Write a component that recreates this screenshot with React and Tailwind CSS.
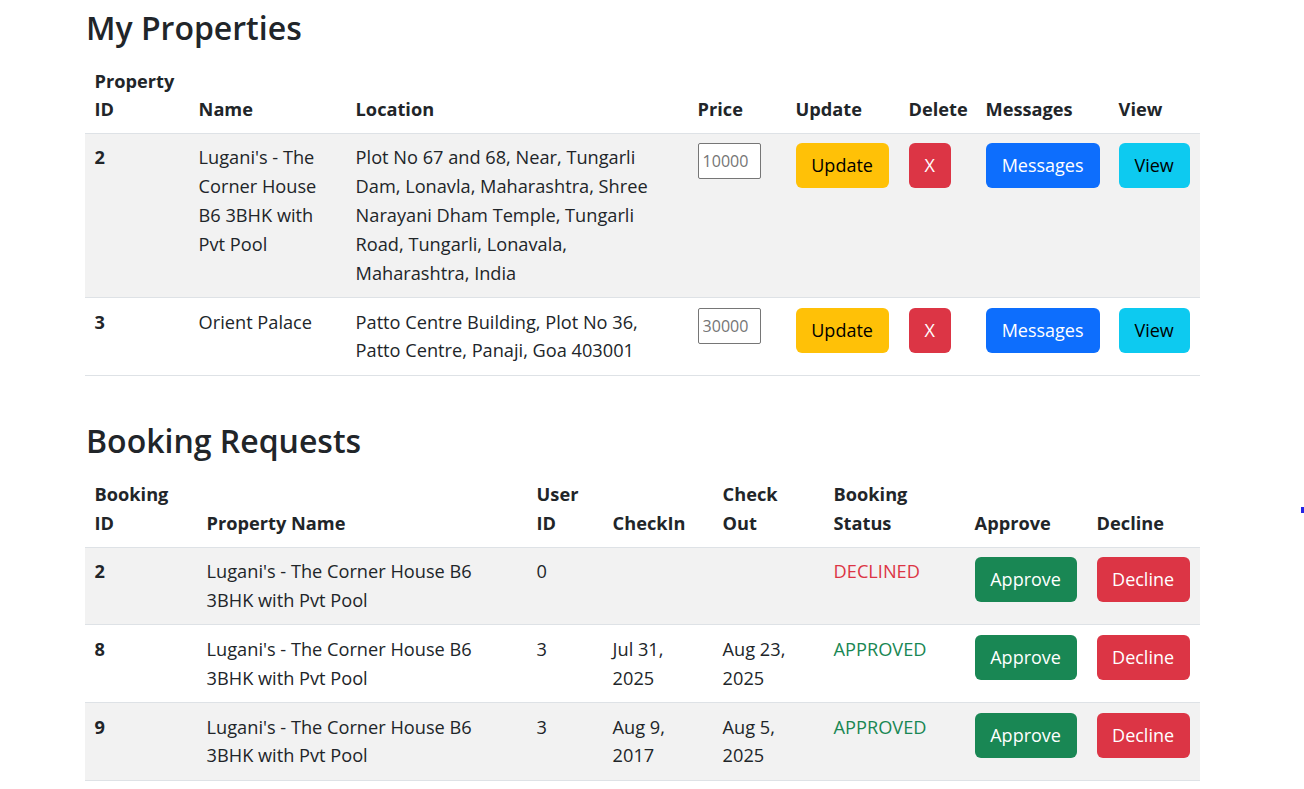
import React from "react";

const FONT = "font-['Segoe_UI','Open_Sans','Noto_Sans',sans-serif]";

function Btn({ w, bg, fg, children }) {
  return (
    <button
      className={`inline-flex h-[45px] items-center justify-center rounded-[6px] border border-transparent text-[18px] leading-[28.8px] ${w} ${bg} ${fg}`}
    >
      {children}
    </button>
  );
}

function Lines({ lines }) {
  return (
    <div className="whitespace-nowrap">
      {lines.map((l, i) => (
        <div key={i}>{l}</div>
      ))}
    </div>
  );
}

const properties = [
  {
    id: "2",
    name: ["Lugani's - The", "Corner House", "B6 3BHK with", "Pvt Pool"],
    loc: [
      "Plot No 67 and 68, Near, Tungarli",
      "Dam, Lonavla, Maharashtra, Shree",
      "Narayani Dham Temple, Tungarli",
      "Road, Tungarli, Lonavala,",
      "Maharashtra, India",
    ],
    price: "10000",
  },
  {
    id: "3",
    name: ["Orient Palace"],
    loc: ["Patto Centre Building, Plot No 36,", "Patto Centre, Panaji, Goa 403001"],
    price: "30000",
  },
];

const bookings = [
  {
    id: "2",
    name: ["Lugani's - The Corner House B6", "3BHK with Pvt Pool"],
    user: "0",
    inD: [],
    outD: [],
    status: "DECLINED",
  },
  {
    id: "8",
    name: ["Lugani's - The Corner House B6", "3BHK with Pvt Pool"],
    user: "3",
    inD: ["Jul 31,", "2025"],
    outD: ["Aug 23,", "2025"],
    status: "APPROVED",
  },
  {
    id: "9",
    name: ["Lugani's - The Corner House B6", "3BHK with Pvt Pool"],
    user: "3",
    inD: ["Aug 9,", "2017"],
    outD: ["Aug 5,", "2025"],
    status: "APPROVED",
  },
];

const th = "px-[9.6px] pt-[10.6px] pb-[8.6px] text-left align-bottom font-bold border-b border-[#dee2e6]";
const td = "px-[9.6px] py-[9.6px] align-top border-b border-[#dee2e6]";

export default function App() {
  return (
    <div className={`relative min-h-[789px] bg-white text-[#212529] text-[18.2px] leading-[28.8px] ${FONT}`}>
      <div className="ml-[85px] w-[1115px] pt-[5px]">
        <h2 className="mb-[5px] pl-[1px] text-[32px] font-semibold leading-[46px]">My Properties</h2>
        <table className="mb-[42px] w-full table-fixed border-collapse">
          <colgroup>
            <col className="w-[104px]" />
            <col className="w-[157px]" />
            <col className="w-[342px]" />
            <col className="w-[98px]" />
            <col className="w-[113px]" />
            <col className="w-[77px]" />
            <col className="w-[133px]" />
            <col className="w-[91px]" />
          </colgroup>
          <thead>
            <tr>
              <th className={th}>Property<br />ID</th>
              <th className={th}>Name</th>
              <th className={th}>Location</th>
              <th className={th}>Price</th>
              <th className={th}>Update</th>
              <th className={th}>Delete</th>
              <th className={th}>Messages</th>
              <th className={th}>View</th>
            </tr>
          </thead>
          <tbody>
            {properties.map((p, i) => (
              <tr key={p.id} className={i % 2 === 0 ? "bg-[#f2f2f2]" : "bg-white"}>
                <td className={`${td} font-bold`}>{p.id}</td>
                <td className={td}><Lines lines={p.name} /></td>
                <td className={td}><Lines lines={p.loc} /></td>
                <td className={td}>
                  <input
                    type="text"
                    placeholder={p.price}
                    className="block h-[36px] w-[63px] rounded-[2px] border border-[#767676] bg-white pl-[4px] text-[16px] placeholder:text-[#757575] font-['Segoe_UI','Open_Sans',sans-serif]"
                  />
                </td>
                <td className={td}>
                  <Btn w="w-[93px]" bg="bg-[#ffc107]" fg="text-black">Update</Btn>
                </td>
                <td className={td}>
                  <Btn w="w-[42px]" bg="bg-[#dc3545]" fg="text-white">X</Btn>
                </td>
                <td className={td}>
                  <Btn w="w-[114px]" bg="bg-[#0d6efd]" fg="text-white">Messages</Btn>
                </td>
                <td className={td}>
                  <Btn w="w-[71px]" bg="bg-[#0dcaf0]" fg="text-black">View</Btn>
                </td>
              </tr>
            ))}
          </tbody>
        </table>

        <h2 className="mb-[6px] pl-[1px] text-[32px] font-semibold leading-[46px]">Booking Requests</h2>
        <table className="w-full table-fixed border-collapse">
          <colgroup>
            <col className="w-[112px]" />
            <col className="w-[330px]" />
            <col className="w-[76px]" />
            <col className="w-[110px]" />
            <col className="w-[111px]" />
            <col className="w-[141px]" />
            <col className="w-[122px]" />
            <col className="w-[113px]" />
          </colgroup>
          <thead>
            <tr>
              <th className={th}>Booking<br />ID</th>
              <th className={th}>Property Name</th>
              <th className={th}>User<br />ID</th>
              <th className={th}>CheckIn</th>
              <th className={th}>Check<br />Out</th>
              <th className={th}>Booking<br />Status</th>
              <th className={th}>Approve</th>
              <th className={th}>Decline</th>
            </tr>
          </thead>
          <tbody>
            {bookings.map((b, i) => (
              <tr key={b.id} className={i % 2 === 0 ? "bg-[#f2f2f2]" : "bg-white"}>
                <td className={`${td} font-bold`}>{b.id}</td>
                <td className={td}><Lines lines={b.name} /></td>
                <td className={td}>{b.user}</td>
                <td className={td}><Lines lines={b.inD} /></td>
                <td className={td}><Lines lines={b.outD} /></td>
                <td className={`${td} ${b.status === "DECLINED" ? "text-[#dc3545]" : "text-[#198754]"}`}>{b.status}</td>
                <td className={td}>
                  <Btn w="w-[102px]" bg="bg-[#198754]" fg="text-white">Approve</Btn>
                </td>
                <td className={td}>
                  <Btn w="w-[93px]" bg="bg-[#dc3545]" fg="text-white">Decline</Btn>
                </td>
              </tr>
            ))}
          </tbody>
        </table>
      </div>
      <div className="absolute left-[1301px] top-[507px] h-[6px] w-[3px] bg-[#2424e6]" />
    </div>
  );
}
